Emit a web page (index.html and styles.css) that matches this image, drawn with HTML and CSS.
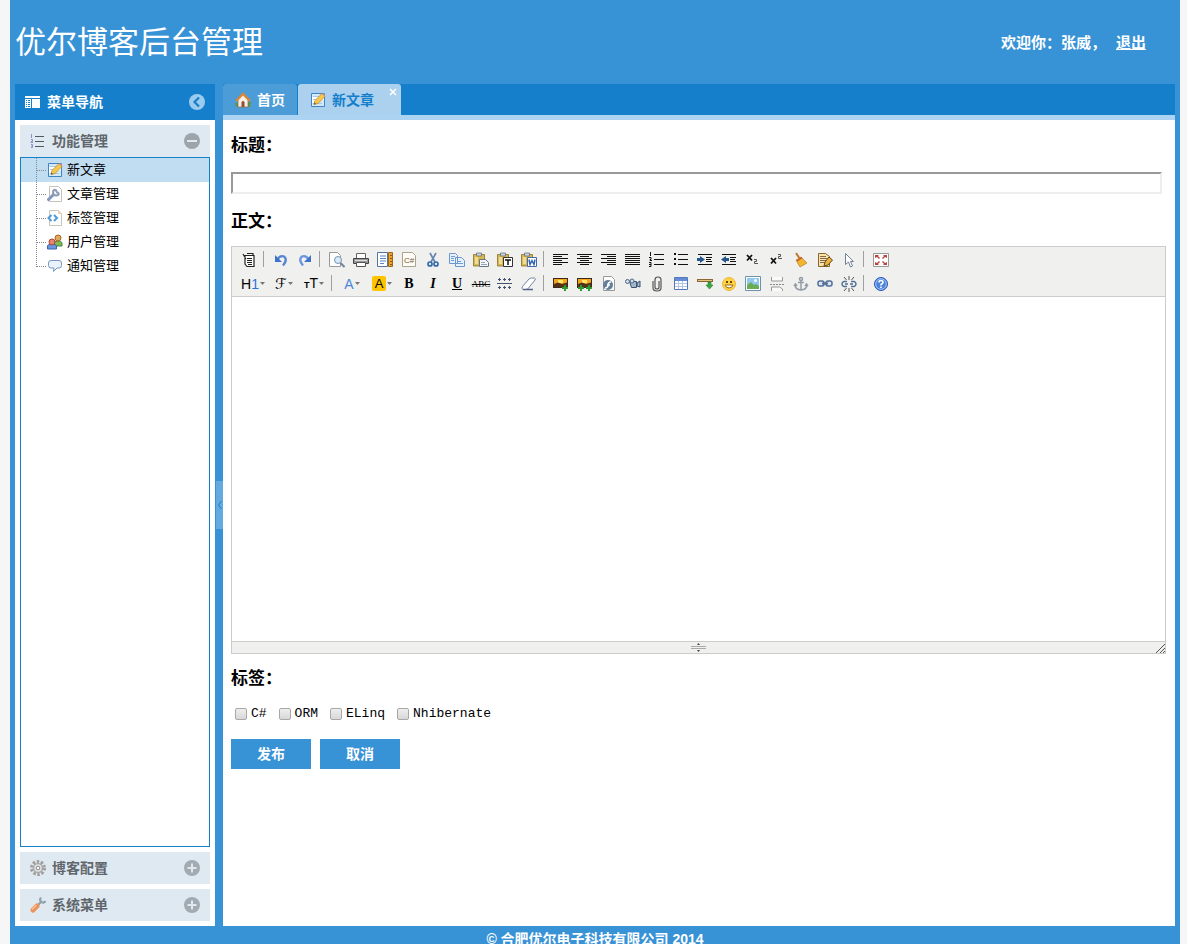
FILE: index.html
```html
<!DOCTYPE html>
<html lang="zh-CN">
<head>
<meta charset="utf-8">
<title>优尔博客后台管理</title>
<link rel="stylesheet" href="styles.css">
</head>
<body>
<svg class="sprite" aria-hidden="true">
  <symbol id="i-note" viewBox="0 0 16 16"><path fill="#fff" stroke="#3f83c4" d="M1.500 1.500h13v13h-13z"/><path fill="#d4e9f8" d="M2 2h12v3H2zM2 11l12-3v6H2z"/><path stroke="#a9c9e8" d="M3 4.500h6M3 7.500h4M3 11.500h9"/><path fill="#f6c94c" stroke="#b88022" stroke-width=".7" d="M4 12.500l1-4 7-7 3 3-7 7z"/><path fill="#4b4b4b" d="M4 12.500l.5-2 1.500 1.500z"/><path fill="#e8908a" d="M12 2.300l1.200-1 2 2-1 1z"/></symbol>
  <symbol id="i-plus" viewBox="0 0 16 16"><circle cx="8" cy="8" r="8" fill="#a3abb2"/><path stroke="#e0e9f0" stroke-width="2" d="M3.500 8h9M8 3.500v9"/></symbol>
  <symbol id="i-caret" viewBox="0 0 5 3"><path fill="#777" d="M0 0h5L2.500 3z"/></symbol>
  <symbol id="i-clip" viewBox="0 0 16 16"><path fill="#d9b850" stroke="#85702c" stroke-width=".8" d="M.5 2.500h11V14H.5z"/><path fill="#eedc93" d="M2 5h3v7H2z"/><path fill="#c9d3dd" stroke="#5d6670" stroke-width=".7" d="M3.500 1h5v3h-5z"/></symbol>
  <symbol id="i-pic" viewBox="0 0 16 16"><path fill="#3b2a1c" d="M0 2h15v10H0z"/><path fill="#f2a51f" d="M1 3h13v5H1z"/><path fill="#ffe36b" d="M5 4h5v3H5z"/><path fill="#543016" d="M1 8l4-1.500L9 8l5-1.500V11H1z"/></symbol>
</svg>
<div class="shell">
  <header class="top">
    <h1 class="site-title">优尔博客后台管理</h1>
    <p class="welcome">欢迎你：张威，<a class="logout" href="#">退出</a></p>
  </header>
  <div class="workspace">
    <nav class="sidebar">
      <div class="panel-head">
        <svg class="icon" viewBox="0 0 16 16"><path fill="#fff" d="M0 2h15v2H0zM0 5h6v9H0zM7 5h8v9H7z"/><path stroke="#157fcc" d="M1 6.500h1M3 6.500h2M1 8.500h1M3 8.500h2M1 10.500h1M3 10.500h2M1 12.500h1M3 12.500h2"/></svg>
        <h2 class="head-text">菜单导航</h2>
        <button class="tool" type="button" aria-label="收起"><svg class="icon" viewBox="0 0 16 16"><circle cx="8" cy="8" r="8" fill="#9bcbed"/><path fill="none" stroke="#157fcc" stroke-width="2.200" d="M10 3.500L5.500 8l4.500 4.500"/></svg></button>
      </div>
      <div class="accordion">
        <div class="acc-head">
          <svg class="icon" viewBox="0 0 16 16"><path fill="none" stroke="#8b93c9" d="M1.500 1v4M1 6.500h1.500v2H1v1h2M1 11.500h1.500v3H1M1 13h1.500"/><path stroke="#4d5a66" d="M5 3.500h9M5 8.500h9M5 13.500h9"/></svg>
          <h3 class="head-text">功能管理</h3>
          <button class="tool" type="button" aria-label="折叠"><svg class="icon" viewBox="0 0 16 16"><circle cx="8" cy="8" r="8" fill="#9ea5aa"/><path stroke="#e0e9f0" stroke-width="2" d="M3 8h10"/></svg></button>
        </div>
        <ul class="tree">
          <li><a class="node selected" href="#"><svg class="elbow" viewBox="0 0 26 24"><path d="M15.500 0v24M16 12.500h9"/></svg><svg class="icon"><use href="#i-note"/></svg>新文章</a></li>
          <li><a class="node" href="#"><svg class="elbow" viewBox="0 0 26 24"><path d="M15.500 0v24M16 12.500h9"/></svg><svg class="icon" viewBox="0 0 16 16"><path fill="#fff" stroke="#c6c1bb" d="M2.500.5h9l3 3v12h-12z"/><path stroke="#7f97c0" stroke-width="3" d="M.5 14.500L7 8"/><path fill="none" stroke="#8d9db5" stroke-width="2" d="M8.500 3.500a3 3 0 1 0 3.500 3.500M8.500 3.500l1.500 3 2 .5"/></svg>文章管理</a></li>
          <li><a class="node" href="#"><svg class="elbow" viewBox="0 0 26 24"><path d="M15.500 0v24M16 12.500h9"/></svg><svg class="icon" viewBox="0 0 16 16"><path fill="#fff" stroke="#c9c4bc" d="M2.500.5h9l3 3v12h-12z"/><path fill="#f3d2b8" d="M11 0v4h4z"/><path fill="none" stroke="#4e9ad6" stroke-width="2" d="M4.500 5L1.500 8l3 3M7 5l3 3-3 3"/></svg>标签管理</a></li>
          <li><a class="node" href="#"><svg class="elbow" viewBox="0 0 26 24"><path d="M15.500 0v24M16 12.500h9"/></svg><svg class="icon" viewBox="0 0 16 16"><path fill="#7dbb55" stroke="#4b8531" d="M7.500 12V8.500c0-2 7-2 7.500.500v3z"/><circle cx="11" cy="4" r="3" fill="#e2a75b" stroke="#a66a24"/><path fill="#6998e0" stroke="#3c62b2" d="M.5 15v-3c0-2.500 8.500-2.500 9 0v3z"/><circle cx="5" cy="8" r="3" fill="#ec8370" stroke="#a64635"/></svg>用户管理</a></li>
          <li><a class="node" href="#"><svg class="elbow" viewBox="0 0 26 24"><path d="M15.500 0v13M16 12.500h9"/></svg><svg class="icon" viewBox="0 0 16 16"><path fill="#eaf3fc" stroke="#7797c2" d="M4 2.500h8q2.500 0 2.500 2.500v2.500Q14.500 10 12 10h-2l-3.500 3.500L7 10H4Q1.500 10 1.500 7.500V5Q1.500 2.500 4 2.500z"/></svg>通知管理</a></li>
        </ul>
        <div class="acc-head">
          <svg class="icon" viewBox="0 0 16 16"><circle cx="8" cy="8" r="6.500" fill="none" stroke="#a0a0a0" stroke-width="3" stroke-dasharray="2.500 1.584"/><circle cx="8" cy="8" r="4.500" fill="#e4e4e4" stroke="#aaa" stroke-width="1.600"/><circle cx="8" cy="8" r="1.800" fill="#fff" stroke="#888"/></svg>
          <h3 class="head-text">博客配置</h3>
          <button class="tool" type="button" aria-label="展开"><svg class="icon"><use href="#i-plus"/></svg></button>
        </div>
        <div class="acc-head">
          <svg class="icon" viewBox="0 0 16 16"><path fill="none" stroke="#8fa3ab" stroke-width="2.200" d="M11 .5q-2 3 .5 4.500T15.500 4M10.500 5.500L8 8"/><path stroke="#ee9159" stroke-width="5" stroke-linecap="round" d="M3 13l4-4"/><path stroke="#fbc39b" stroke-width="1.500" stroke-linecap="round" d="M2.500 12l3.500-3.500"/></svg>
          <h3 class="head-text">系统菜单</h3>
          <button class="tool" type="button" aria-label="展开"><svg class="icon"><use href="#i-plus"/></svg></button>
        </div>
      </div>
    </nav>
    <div class="splitter"><button class="split-handle" type="button" aria-label="收起菜单"><svg viewBox="0 0 4 8" width="4" height="8"><path fill="none" stroke="#157fcc" d="M3.500 0L.5 4l3 4"/></svg></button></div>
    <main class="main">
      <div class="tabs">
        <a class="tab" href="#"><svg class="icon" viewBox="0 0 16 16"><path fill="#5d9646" d="M0 11h5v4H1zM11 10h5l-1 5h-4z"/><path fill="#f4efe8" stroke="#8b6a4c" stroke-width=".7" d="M3 7l5-5 5 5v8H3z"/><path fill="none" stroke="#d9863a" stroke-width="2.400" d="M1 9l7-7 7 7"/><path fill="#974d34" d="M6.500 15v-5q1.500-2 3 0v5z"/></svg>首页</a>
        <a class="tab active" href="#"><svg class="icon"><use href="#i-note"/></svg>新文章<svg class="tab-close" viewBox="0 0 8 8"><path stroke="#fff" stroke-width="1.500" d="M1 1l6 6M7 1L1 7"/></svg></a>
      </div>
      <form class="article">
        <label class="field-name" for="title">标题：</label>
        <input class="title-input" id="title" type="text">
        <label class="field-name" for="body">正文：</label>
        <div class="editor">
          <div class="toolbar">
            <div class="tool-row">
              <button type="button" aria-label="HTML代码"><svg class="icon" viewBox="0 0 16 16"><path fill="#fff" stroke="#222" stroke-width="1.200" d="M4 3.500h9v11H6L4 12zM6 1.500h6v2M2 2l3 5"/><path stroke="#222" d="M6 6.500h5M6 8.500h5M6 10.500h5M7 12.500h4"/></svg></button><span class="sep"></span>
              <button type="button" aria-label="后退"><svg class="icon" viewBox="0 0 16 16"><path fill="none" stroke="#5685d6" stroke-width="2.400" d="M4 8q3-5 7-3.500 4 3-1 9"/><path fill="#3f72cb" d="M2 3v7h7z"/></svg></button>
              <button type="button" aria-label="前进"><svg class="icon" viewBox="0 0 16 16"><path fill="none" stroke="#6b96df" stroke-width="2.400" d="M12 8Q9 3 5 4.500q-4 3 1 9"/><path fill="#3f72cb" d="M14 3v7H7z"/></svg></button><span class="sep"></span>
              <button type="button" aria-label="预览"><svg class="icon" viewBox="0 0 16 16"><path fill="#fff" stroke="#999" d="M.5.500h8l3 3v11H.5z"/><circle cx="9" cy="8" r="3.500" fill="#d9ebf8" stroke="#7894ad"/><path stroke="#7088a0" stroke-width="2" d="M11.500 11l4 4"/></svg></button>
              <button type="button" aria-label="打印"><svg class="icon" viewBox="0 0 16 16"><path fill="#fff" stroke="#666" d="M3.500 1.500h9v5h-9z"/><path fill="#999" stroke="#444" d="M.5 6.500h15v5H.5z"/><path fill="#fff" stroke="#555" d="M3.500 10.500h9v4h-9z"/><path stroke="#ddd" d="M2 8.500h12"/></svg></button>
              <button type="button" aria-label="模板"><svg class="icon" viewBox="0 0 16 16"><path fill="#fff" stroke="#5474a5" d="M.5.5h10v14H.5z"/><path stroke="#5a86c6" stroke-width="1.200" d="M3 4h6M3 6.500h6M3 9h6M3 11.500h4"/><path fill="#eca52c" stroke="#9d6817" d="M11.500.5h4v14h-4z"/><path stroke="#8a5a15" d="M13 3.500h2M13 6.500h2M13 9.500h2M13 12.500h2"/></svg></button>
              <button type="button" aria-label="插入代码"><svg class="icon" viewBox="0 0 16 16"><path fill="#fffdf6" stroke="#aaa48c" d="M1.500.5h10l3 3v11h-13z"/><text x="3" y="11" class="t-code">C#</text></svg></button>
              <button type="button" aria-label="剪切"><svg class="icon" viewBox="0 0 16 16"><path stroke="#6388ad" stroke-width="1.700" d="M5 1l5 9M11 1L6 10"/><circle cx="5" cy="12" r="2" fill="none" stroke="#3269a8" stroke-width="1.700"/><circle cx="11" cy="12" r="2" fill="none" stroke="#3269a8" stroke-width="1.700"/></svg></button>
              <button type="button" aria-label="复制"><svg class="icon" viewBox="0 0 16 16"><path fill="#e6f0fb" stroke="#6f96c8" d="M.5 1.500h6l2 2v8h-8zM6.500 5.500h6l3 3v6h-9z"/><path stroke="#6d9cd4" d="M2 4.500h4M2 6.500h3M2 8.500h3M8 9.500h4M8 11.500h6"/></svg></button>
              <button type="button" aria-label="粘贴"><svg class="icon"><use href="#i-clip"/><path fill="#f4f8fc" stroke="#657689" d="M6.500 7.500h6l3 3v4h-9z"/><path stroke="#96a5b5" d="M8 10.500h4M8 12.500h6"/></svg></button>
              <button type="button" aria-label="粘贴为无格式文本"><svg class="icon"><use href="#i-clip"/><path fill="#fff" stroke="#333" d="M6.500 5.500h9v9h-9z"/><path stroke="#111" stroke-width="1.500" d="M8 8h6M11 8v5"/></svg></button>
              <button type="button" aria-label="从Word粘贴"><svg class="icon"><use href="#i-clip"/><path fill="#fff" stroke="#446ba8" d="M6.500 5.500h9v9h-9z"/><path fill="none" stroke="#2c5fb4" stroke-width="1.400" d="M8 7.500l1 5 2-4 2 4 1-5"/></svg></button><span class="sep"></span>
              <button type="button" aria-label="左对齐"><svg class="icon" viewBox="0 0 16 16"><path class="ink" d="M0 2.500h15M0 4.500h9M0 6.500h15M0 8.500h9M0 10.500h15M0 12.500h9"/></svg></button>
              <button type="button" aria-label="居中"><svg class="icon" viewBox="0 0 16 16"><path class="ink" d="M0 2.500h15M3 4.500h9M0 6.500h15M3 8.500h9M0 10.500h15M3 12.500h9"/></svg></button>
              <button type="button" aria-label="右对齐"><svg class="icon" viewBox="0 0 16 16"><path class="ink" d="M0 2.500h15M6 4.500h9M0 6.500h15M6 8.500h9M0 10.500h15M6 12.500h9"/></svg></button>
              <button type="button" aria-label="两端对齐"><svg class="icon" viewBox="0 0 16 16"><path class="ink" d="M0 2.500h15M0 4.500h15M0 6.500h15M0 8.500h15M0 10.500h15M0 12.500h15"/></svg></button>
              <button type="button" aria-label="编号"><svg class="icon" viewBox="0 0 16 16"><path class="ink" d="M5 2.500h10M5 7.500h10M5 12.500h10M1.500 0v4M0 5.500h2v2H1v1h2M0 10.500h2v4H0M0 12.500h2"/></svg></button>
              <button type="button" aria-label="项目符号"><svg class="icon" viewBox="0 0 16 16"><path class="ink" d="M5 2.500h10M5 7.500h10M5 12.500h10"/><path fill="#111" d="M1 1h2v2H1zM1 6h2v2H1zM1 11h2v2H1z"/></svg></button>
              <button type="button" aria-label="增加缩进"><svg class="icon" viewBox="0 0 16 16"><path class="ink" d="M1 2.500h14M9 5.500h6M9 7.500h5M9 9.500h6M1 12.500h14"/><path fill="#24558b" d="M0 6h3V4l5 3.500L3 11V9H0z"/></svg></button>
              <button type="button" aria-label="减少缩进"><svg class="icon" viewBox="0 0 16 16"><path class="ink" d="M1 2.500h14M9 5.500h6M9 7.500h5M9 9.500h6M1 12.500h14"/><path fill="#24558b" d="M8 6H5V4L0 7.500 5 11V9h3z"/></svg></button>
              <button type="button" aria-label="下标"><svg class="icon" viewBox="0 0 16 16"><path stroke="#111" stroke-width="1.800" d="M2 3l5 5.500M7 3L2 8.500"/><path fill="none" stroke="#555" d="M9 7.500h2.500v2H9.500v2H13"/></svg></button>
              <button type="button" aria-label="上标"><svg class="icon" viewBox="0 0 16 16"><path stroke="#111" stroke-width="1.800" d="M2 6l5 5.500M7 6l-5 5.500"/><path fill="none" stroke="#555" d="M9 2.500h2.500v2H9.500v2H13"/></svg></button>
              <button type="button" aria-label="清理HTML代码"><svg class="icon" viewBox="0 0 16 16"><path stroke="#b9782e" stroke-width="2" d="M3 1l4 6"/><path fill="#f1b62f" stroke="#ba7c1c" stroke-width=".7" d="M3 8l5-3 6 6-7 4z"/><path stroke="#c84e35" stroke-width="1.500" d="M4 9L9 5.500"/></svg></button>
              <button type="button" aria-label="一键排版"><svg class="icon" viewBox="0 0 16 16"><path fill="#f8e2ad" stroke="#8b6326" d="M1.500 1.500h7l4 3v10h-11z"/><path stroke="#83684a" d="M3 4.500h6M3 6.500h7M3 8.500h6M3 10.500h5"/><path fill="#f0b43a" stroke="#5d461e" d="M7 14l1-4 4-5 3.500 3-4.500 5z"/></svg></button>
              <button type="button" aria-label="全选"><svg class="icon" viewBox="0 0 16 16"><path fill="#fff" stroke="#718197" d="M4.500 1.500v11l3-2.500 2 5 2-1-2-4.500h3z"/></svg></button><span class="sep"></span>
              <button type="button" aria-label="全屏显示"><svg class="icon" viewBox="0 0 16 16"><path fill="#fff" stroke="#999" d="M.5 1.500h15v13H.5z"/><path fill="#b94444" d="M2 3h4L5 4l2 2-1 1-2-2-2 1zM14 3h-4l1 1-2 2 1 1 2-2 2 1zM2 13h4l-1-1 2-2-1-1-2 2-2-1zM14 13h-4l1-1-2-2 1-1 2 2 2-1z"/></svg></button>
            </div>
            <div class="tool-row lower">
              <button class="drop first" type="button" aria-label="段落"><span class="g-h">H<span class="g-one">1</span></span><svg class="caret"><use href="#i-caret"/></svg></button>
              <button class="drop" type="button" aria-label="字体"><span class="g-f">ℱ</span><svg class="caret"><use href="#i-caret"/></svg></button>
              <button class="drop" type="button" aria-label="文字大小"><span class="g-t"><small class="g-small">T</small>T</span><svg class="caret"><use href="#i-caret"/></svg></button><span class="sep"></span>
              <button class="drop" type="button" aria-label="文字颜色"><span class="g-color">A</span><svg class="caret"><use href="#i-caret"/></svg></button>
              <button class="drop" type="button" aria-label="文字背景"><span class="g-back">A</span><svg class="caret"><use href="#i-caret"/></svg></button>
              <button type="button" aria-label="粗体"><b class="g-serif">B</b></button>
              <button type="button" aria-label="斜体"><i class="g-serif">I</i></button>
              <button type="button" aria-label="下划线"><u class="g-serif">U</u></button>
              <button type="button" aria-label="删除线"><s class="g-strike">ABC</s></button>
              <button type="button" aria-label="行距"><svg class="icon" viewBox="0 0 16 16"><path stroke="#445470" d="M0 7.500h15M1 3.500h3M6 3.500h3M11 3.500h3M2.500 2v3M7.500 2v3M12.500 2v3M1 11.500h3M6 11.500h3M11 11.500h3M2.500 10v3M7.500 10v3M12.500 10v3"/></svg></button>
              <button type="button" aria-label="删除格式"><svg class="icon" viewBox="0 0 16 16"><path fill="#fff" stroke="#7583a0" d="M1.500 10.500L8 3q1-1 2.500-1h3q1.500.5.500 2l-6.500 8q-1 1.500-2.500 1.500H2q-2-.5-.5-3z"/><path stroke="#53648a" stroke-width="1.500" d="M2 13.500h10"/></svg></button><span class="sep"></span>
              <button type="button" aria-label="图片"><svg class="icon"><use href="#i-pic"/><path stroke="#2c9c32" stroke-width="2" d="M9 12h6M12 9v6"/></svg></button>
              <button type="button" aria-label="批量图片上传"><svg class="icon"><use href="#i-pic"/><path stroke="#2c9c32" stroke-width="2" d="M1 12h6M4 9v6M9 12h6M12 9v6"/></svg></button>
              <button type="button" aria-label="Flash"><svg class="icon" viewBox="0 0 16 16"><path fill="#fff" stroke="#9a9a9a" d="M2.500.5h8l3 3v11h-11z"/><circle cx="7" cy="9" r="5" fill="#657f9b"/><path fill="none" stroke="#fff" stroke-width="1.600" d="M4 12q3 0 3-3t3-3M6 9h3"/></svg></button>
              <button type="button" aria-label="视音频"><svg class="icon" viewBox="0 0 16 16"><path fill="#a3b7cb" stroke="#385373" d="M4.500 5.500h7v6h-5zM12 7l3-2v6l-3-1z"/><circle cx="2.500" cy="5.500" r="2" fill="#d4deea" stroke="#4c6683"/><circle cx="7" cy="5" r="2" fill="#d4deea" stroke="#4c6683"/></svg></button>
              <button type="button" aria-label="插入文件"><svg class="icon" viewBox="0 0 16 16"><path fill="none" stroke="#555" stroke-width="1.200" d="M4 5v7q0 3 4 3t4-3V4q0-3-3-3T6 4v7q0 2 2 2t2-2V5"/></svg></button>
              <button type="button" aria-label="表格"><svg class="icon" viewBox="0 0 16 16"><path fill="#fff" stroke="#5277bd" d="M1.500 1.500h13v12h-13z"/><path fill="#658cd4" d="M2 2h12v3H2z"/><path stroke="#b3c5e3" d="M2 7.500h12M2 10.500h12M5.500 5v8M9.500 5v8"/></svg></button>
              <button type="button" aria-label="插入横线"><svg class="icon" viewBox="0 0 16 16"><path fill="#8c6734" d="M0 3h16v3H0z"/><path stroke="#e4c37d" d="M1 4.500h14"/><path fill="#39a843" stroke="#23802b" stroke-width=".6" d="M11 6h3v3h2l-3.500 4L9 9h2z"/></svg></button>
              <button type="button" aria-label="插入表情"><svg class="icon" viewBox="0 0 16 16"><circle cx="8" cy="8" r="6.500" fill="#ffd342" stroke="#f0b540"/><path fill="#6e4812" d="M5 5h2v2H5zM9 5h2v2H9z"/><path fill="#fff" stroke="#9b6a19" d="M4 9h8q-1 3-4 3T4 9z"/></svg></button>
              <button type="button" aria-label="地图"><svg class="icon" viewBox="0 0 16 16"><path fill="#fff" stroke="#6d93a8" d="M.5.500h15v14H.5z"/><path fill="#91c8ef" d="M2 2h12v11H2z"/><path fill="#68ad56" d="M2 9l4-3 3 3 2-1 3 2v3H2z"/><circle cx="10.500" cy="4.500" r="1.500" fill="#fff"/></svg></button>
              <button type="button" aria-label="插入分页符"><svg class="icon" viewBox="0 0 16 16"><path fill="#fafafa" stroke="#999" d="M2.500 1v4h11V1M2.500 15v-4h8l3 2v2"/><path stroke="#888" stroke-dasharray="2 1" d="M1 8.500h14"/></svg></button>
              <button type="button" aria-label="锚点"><svg class="icon" viewBox="0 0 16 16"><g fill="none" stroke="#929da7" stroke-width="1.500"><circle cx="8" cy="3" r="1.500"/><path d="M8 5v9M5 6.500h6M2 8.500q0 5 6 5.500 6-.5 6-5.500M1 10l1.500-2 1.500 2M12 10l1.500-2 1.500 2"/></g></svg></button>
              <button type="button" aria-label="超级链接"><svg class="icon" viewBox="0 0 16 16"><g fill="#dce5f0" stroke="#536f96" stroke-width="1.500"><rect x="1" y="5" width="6" height="5" rx="2"/><rect x="9" y="5" width="6" height="5" rx="2"/></g><path stroke="#536f96" stroke-width="2" d="M5 7.500h6"/></svg></button>
              <button type="button" aria-label="取消超级链接"><svg class="icon" viewBox="0 0 16 16"><g fill="none" stroke="#536f96" stroke-width="1.500"><path d="M6 5.500H3Q1 6 1 8t2 2.500h3M10 5.500h3q2 .5 2 2.500t-2 2.500h-3M4 8h3M9 8h3"/></g><path stroke="#555" d="M8 0v4M3 1l2.500 3M13 1l-2.500 3M8 12v4M3 15l2.500-3M13 15l-2.500-3"/></svg></button><span class="sep"></span>
              <button type="button" aria-label="关于"><svg class="icon" viewBox="0 0 16 16"><circle cx="8" cy="8" r="6.500" fill="#4a83dc" stroke="#2859b5"/><circle cx="8" cy="8" r="5.300" fill="none" stroke="#a9c7f2"/><path fill="none" stroke="#fff" stroke-width="1.600" d="M6 6.500Q6 4.500 8 4.500t2 1.700Q10 7.500 8 8.500V9.500M8 10.500v1.500"/></svg></button>
            </div>
          </div>
          <textarea class="edit-area" id="body"></textarea>
          <div class="status">
            <svg class="grip" viewBox="0 0 15 9"><path stroke="#aaa" d="M0 3.500h15M0 5.500h15"/><path fill="#444" d="M6 2h3L7.500 0zM6 7h3L7.500 9z"/></svg>
            <svg class="corner" viewBox="0 0 10 10"><path stroke="#555" d="M1 10l9-9M5 10l5-5M8 10l2-2"/></svg>
          </div>
        </div>
        <fieldset class="tags">
          <legend class="field-name">标签：</legend>
          <div class="tag-list">
            <label class="tag"><input class="check" type="checkbox">C#</label>
            <label class="tag"><input class="check" type="checkbox">ORM</label>
            <label class="tag"><input class="check" type="checkbox">ELinq</label>
            <label class="tag"><input class="check" type="checkbox">Nhibernate</label>
          </div>
        </fieldset>
        <div class="actions">
          <button class="action" type="button">发布</button>
          <button class="action" type="button">取消</button>
        </div>
      </form>
    </main>
  </div>
  <footer class="footer">© 合肥优尔电子科技有限公司 2014</footer>
</div>
</body>
</html>
```
FILE: styles.css
```css
* { box-sizing: border-box; }
body {
  margin: 0;
  background: #f6f6f6;
  color: #000;
  font: 14px/20px "Liberation Sans", "Noto Sans CJK SC", sans-serif;
}
h1, h2, h3, p, ul, fieldset { margin: 0; padding: 0; border: 0; }
button { padding: 0; border: 0; background: none; font: inherit; color: inherit; cursor: pointer; }
a { color: inherit; text-decoration: none; }
svg { display: block; flex: none; }
.sprite { position: absolute; width: 0; height: 0; }
.icon { width: 16px; height: 16px; }

.shell {
  display: flex;
  flex-direction: column;
  height: 100vh;
  margin: 0 7px 0 10px;
  padding: 0 5px;
  background: #3892d6;
  overflow: hidden;
}
.top {
  display: flex;
  flex: none;
  align-items: center;
  justify-content: space-between;
  height: 84px;
  padding: 2px 29px 0 0;
  color: #fff;
}
.site-title { font-size: 31px; line-height: 40px; font-weight: 400; }
.welcome { font-size: 15px; font-weight: bold; }
.logout { margin-left: 10px; text-decoration: underline; }

.workspace { display: flex; flex: 1; min-height: 0; }
.sidebar { display: flex; flex: none; flex-direction: column; width: 200px; background: #fff; }
.panel-head, .acc-head { display: flex; flex: none; align-items: center; gap: 6px; padding: 0 10px; }
.panel-head { height: 36px; background: #157fcc; color: #fff; }
.acc-head { height: 32px; background: #dfe9f1; color: #5f666c; }
.head-text { flex: 1; font-size: 14px; font-weight: bold; }
.accordion { display: flex; flex: 1; flex-direction: column; gap: 5px; min-height: 0; padding: 5px; }
.tree {
  flex: 1;
  margin-top: -5px;
  border: 1px solid #157fcc;
  list-style: none;
}
.node { display: flex; align-items: center; height: 24px; font-size: 13px; }
.node .icon { margin-right: 4px; }
.selected { background: #c0ddf2; }
.elbow { width: 26px; height: 24px; fill: none; stroke: #888; stroke-dasharray: 1 1; }

.splitter { display: flex; flex: none; align-items: center; justify-content: flex-end; width: 8px; }
.split-handle { display: flex; align-items: center; justify-content: center; width: 7px; height: 48px; background: #62aae0; }

.main { display: flex; flex: 1; flex-direction: column; min-width: 0; background: #fff; }
.tabs { display: flex; flex: none; gap: 1px; height: 36px; border-bottom: 5px solid #acd3f1; background: #157fcc; }
.tab {
  display: flex;
  align-items: center;
  gap: 6px;
  padding: 0 12px;
  border-radius: 3px 3px 0 0;
  background: #4b9cd7;
  color: #fff;
  font-weight: bold;
}
.active { position: relative; padding-right: 27px; background: #acd1ee; color: #157fcc; }
.tab-close { position: absolute; top: 4px; right: 4px; width: 8px; height: 8px; }

.article { display: flex; flex-direction: column; padding: 15px 9px 0 8px; }
.field-name { padding: 0; font-size: 17px; line-height: 22px; font-weight: bold; }
.title-input {
  height: 22px;
  margin: 15px 4px 17px 0;
  padding: 1px 2px;
  border: 2px solid;
  border-color: #999 #eee #eee #999;
  font: inherit;
}
.editor { margin: 13px 0 14px; border: 1px solid #ccc; }
.toolbar { padding: 1px 5px; border-bottom: 1px solid #ccc; background: #f0f0ee; }
.tool-row { display: flex; flex-wrap: wrap; }
.tool-row button { display: flex; align-items: center; justify-content: center; width: 24px; height: 24px; }
.lower button { height: 23px; }
.tool-row .drop { gap: 1px; width: 30px; }
.tool-row .first { width: 32px; }
.sep { width: 1px; height: 16px; margin: 3px 5px 3px 2px; background: #a0a0a0; }
.caret { width: 5px; height: 3px; }
.ink { fill: none; stroke: #111; }
.t-code { font-size: 8px; fill: #775b36; }
.g-h { font-size: 14px; }
.g-one { color: #2b72d8; }
.g-f { font: 15px/20px "DejaVu Sans", sans-serif; }
.g-t { font-size: 14px; }
.g-small { font-size: 9px; font-weight: bold; }
.g-color { color: #4a86dc; font-size: 14px; }
.g-back { padding: 0 3px; border-radius: 2px; background: #ffc400; font-size: 13px; line-height: 15px; }
.g-serif { font: bold 14px/20px "Liberation Serif", serif; }
i.g-serif { font-style: italic; }
.g-strike { font: 9px/20px "Liberation Serif", serif; }
.edit-area { display: block; width: 100%; height: 344px; padding: 4px; border: 0; background: #fff; resize: none; font: inherit; }
.status {
  display: grid;
  grid-template-columns: 1fr auto 1fr;
  align-items: center;
  height: 12px;
  border-top: 1px solid #ccc;
  background: #f0f0ee;
}
.grip { grid-column: 2; width: 15px; height: 9px; }
.corner { justify-self: end; width: 10px; height: 10px; }

.tag-list { display: flex; flex-wrap: wrap; gap: 8px; padding: 14px 0 15px; }
.tag { display: flex; align-items: center; font: 13px/20px "Liberation Mono", monospace; }
.check {
  width: 12px;
  height: 12px;
  margin: 0 4px;
  border: 1px solid #a8a8a8;
  border-radius: 2px;
  background: linear-gradient(#eee, #d8d8d8);
  appearance: none;
}
.check:checked { background: #3892d6; }
.actions { display: flex; gap: 9px; }
.action { width: 80px; height: 30px; background: #3892d6; color: #fff; font-weight: bold; }
.footer { flex: none; height: 18px; padding-top: 3px; color: #fff; font-weight: bold; text-align: center; }
```
